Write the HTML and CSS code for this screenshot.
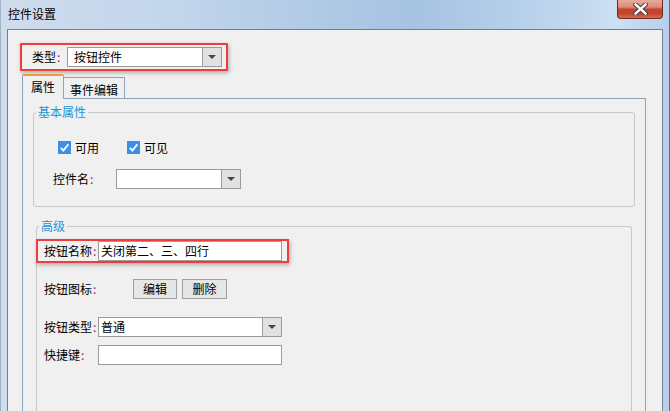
FILE: index.html
```html
<!DOCTYPE html>
<html>
<head>
<meta charset="utf-8">
<link rel="stylesheet" href="styles.css">
</head>
<body>
<div class="window">
  <div class="titlebar">
    <span class="title">控件设置</span>
    <div class="close">
      <svg width="15" height="12" viewBox="0 0 15 12">
        <path d="M2.5 1.5 L12.5 10.5 M12.5 1.5 L2.5 10.5" stroke="#3a3f4a" stroke-width="4.4" stroke-linecap="square" fill="none"/>
        <path d="M2.5 1.5 L12.5 10.5 M12.5 1.5 L2.5 10.5" stroke="#ffffff" stroke-width="2.4" stroke-linecap="square" fill="none"/>
      </svg>
    </div>
  </div>
  <div class="client">
    <div class="mark type-mark">
      <span class="lbl lbl-type">类型<span class="colon">:</span></span>
      <div class="combo combo-type"><span class="val">按钮控件</span><span class="arrow"><i class="tri"></i></span></div>
    </div>
    <div class="tabs">
      <div class="tab active">属性</div>
      <div class="tab">事件编辑</div>
    </div>
    <div class="tabpanel">
      <fieldset class="group g1">
        <legend>基本属性</legend>
        <div class="checks">
          <label class="check">
            <svg width="13" height="13" viewBox="0 0 13 13"><rect width="13" height="13" fill="#3a8fe8"/><path d="M3 6.8 L5.4 9.6 L10.4 3.2" stroke="#fff" stroke-width="1.8" fill="none"/></svg>
            <span>可用</span>
          </label>
          <label class="check">
            <svg width="13" height="13" viewBox="0 0 13 13"><rect width="13" height="13" fill="#3a8fe8"/><path d="M3 6.8 L5.4 9.6 L10.4 3.2" stroke="#fff" stroke-width="1.8" fill="none"/></svg>
            <span>可见</span>
          </label>
        </div>
        <div class="row row-name">
          <span class="lbl lbl-name">控件名<span class="colon">:</span></span>
          <div class="combo combo-name"><span class="val"></span><span class="arrow"><i class="tri"></i></span></div>
        </div>
      </fieldset>
      <fieldset class="group g2">
        <legend>高级</legend>
        <div class="mark btn-mark">
          <span class="lbl lbl-adv">按钮名称<span class="colon">:</span></span>
          <div class="field field-adv"><span class="val">关闭第二、三、四行</span></div>
        </div>
        <div class="row row-icon">
          <span class="lbl lbl-icon">按钮图标<span class="colon">:</span></span>
          <div class="btn btn-edit">编辑</div>
          <div class="btn btn-del">删除</div>
        </div>
        <div class="row row-kind">
          <span class="lbl lbl-adv">按钮类型<span class="colon">:</span></span>
          <div class="combo combo-kind"><span class="val">普通</span><span class="arrow"><i class="tri"></i></span></div>
        </div>
        <div class="row row-key">
          <span class="lbl lbl-adv">快捷键<span class="colon">:</span></span>
          <div class="field field-adv"></div>
        </div>
      </fieldset>
    </div>
  </div>
</div>
</body>
</html>
```

FILE: styles.css
```css
* { box-sizing: border-box; }
html, body {
  margin: 0;
  padding: 0;
}
body {
  width: 670px;
  height: 411px;
  overflow: hidden;
  font-family: "Noto Sans CJK SC", "Noto Sans", sans-serif;
  font-size: 12px;
  color: #000;
}
.window {
  width: 670px;
  height: 411px;
  display: flex;
  flex-direction: column;
  background: linear-gradient(to right, #cfdcec 0%, #c3d6ec 25%, #b2cbe6 45%, #a6c3e2 62%, #b9d2ec 80%, #cddff3 92%, #b7cfea 100%);
  border-left: 1px solid #9fb3c9;
  border-right: 1px solid #5f6e80;
  overflow: hidden;
}
.titlebar {
  height: 29px;
  flex: none;
  display: flex;
  align-items: flex-start;
  padding-left: 7px;
}
.title {
  margin-top: 8px;
  line-height: 12px;
  font-size: 12px;
  color: #000;
}
.close {
  margin-left: auto;
  margin-right: 6px;
  width: 46px;
  height: 19px;
  border: 1px solid #6a3028;
  border-top: none;
  border-radius: 0 0 4px 4px;
  background: linear-gradient(#e9ab9c 0%, #dc8e7e 38%, #c4442d 52%, #c3432b 75%, #dc6a4c 100%);
  display: flex;
  align-items: center;
  justify-content: center;
  padding-bottom: 1px;
}
.client {
  flex: 1;
  min-height: 0;
  margin: 0 6px;
  border: 1px solid #707f94;
  border-bottom: none;
  background: #f0f0f0;
  display: flex;
  flex-direction: column;
  align-items: flex-start;
}
.mark {
  display: flex;
  align-items: center;
  border: 2px solid #ef3c3c;
  box-shadow: 1px 2px 4px rgba(0, 0, 0, 0.28);
}
.type-mark {
  margin: 13px 0 0 12px;
  padding: 2px 4px 2px 10px;
  width: 208px;
}
.lbl {
  flex: none;
  line-height: 14px;
  white-space: nowrap;
}
.colon {
  color: #7a2a7a;
  margin-left: 1px;
}
.lbl-type { width: 35px; }
.combo {
  flex: none;
  height: 20px;
  border: 1px solid #9b9b9b;
  background: #fff;
  display: flex;
}
.combo .val {
  flex: 1;
  line-height: 18px;
  padding-left: 6px;
  white-space: nowrap;
}
.combo .arrow {
  flex: none;
  width: 19px;
  border-left: 1px solid #9b9b9b;
  background: #e1e1e1;
  display: flex;
  align-items: center;
  justify-content: center;
}
.tri {
  display: block;
  width: 0;
  height: 0;
  border-left: 4px solid transparent;
  border-right: 4px solid transparent;
  border-top: 4px solid #454545;
}
.combo-type { width: 155px; }
.tabs {
  margin: 3px 0 0 14px;
  display: flex;
  align-items: flex-end;
  height: 24px;
  flex: none;
  position: relative;
  z-index: 1;
}
.tab {
  height: 21px;
  width: 61px;
  border: 1px solid #8ea3be;
  border-left: none;
  border-bottom: none;
  background: #f0f0f0;
  text-align: center;
  line-height: 14px;
  padding-top: 5px;
}
.tab.active {
  width: 42px;
  height: 25px;
  margin-bottom: -1px;
  border-left: 1px solid #8ea3be;
  border-top: 2px solid #e6a13a;
  border-radius: 2px 2px 0 0;
  padding-top: 4px;
}
.tabpanel {
  align-self: stretch;
  flex: 1;
  min-height: 0;
  margin: 0 16px 0 14px;
  border: 1px solid #8ea3be;
  border-bottom: none;
  display: flex;
  flex-direction: column;
}
.group {
  margin: 0;
  padding: 0;
  border: 1px solid #c9c9c9;
  border-radius: 3px;
  min-width: 0;
}
.group legend {
  padding: 0 2px;
  line-height: 12px;
  color: #1897d8;
}
.g1 {
  flex: none;
  margin: 7px 10px 0 10px;
  padding: 0 0 17px 0;
}
.g1 legend { margin-left: 2px; }
.checks {
  display: flex;
  align-items: center;
  height: 13px;
  margin-top: 23px;
  padding-left: 24px;
}
.check {
  display: flex;
  align-items: center;
  line-height: 13px;
}
.check svg {
  display: block;
  margin-right: 4px;
}
.check + .check { margin-left: 28px; }
.row {
  display: flex;
  align-items: center;
}
.row-name {
  margin-top: 15px;
  padding-left: 19px;
}
.lbl-name { width: 63px; }
.combo-name { width: 125px; }
.g2 {
  flex: 1;
  min-height: 0;
  margin: 13px 13px 0 13px;
  padding: 0;
  border-bottom: none;
  border-radius: 3px 3px 0 0;
}
.g2 legend { margin-left: 2px; }
.btn-mark {
  margin: 7px 0 0 -1px;
  padding: 0 5px 0 6px;
  width: 253px;
  height: 24px;
}
.lbl-adv { width: 54px; }
.field {
  flex: none;
  height: 20px;
  border: 1px solid #9b9b9b;
  background: #fff;
}
.field .val {
  display: block;
  line-height: 18px;
  padding-left: 2px;
  white-space: nowrap;
}
.field-adv { width: 184px; }
.row-icon {
  margin-top: 16px;
  padding-left: 7px;
}
.lbl-icon { width: 89px; }
.btn {
  flex: none;
  height: 20px;
  border: 1px solid #9f9f9f;
  background: #e6e6e6;
  text-align: center;
  line-height: 18px;
}
.btn-edit { width: 44px; }
.btn-del { width: 45px; margin-left: 5px; }
.row-kind {
  margin-top: 18px;
  padding-left: 7px;
}
.combo-kind { width: 184px; }
.combo-kind .val { padding-left: 2px; }
.row-key {
  margin-top: 8px;
  padding-left: 7px;
}
```
